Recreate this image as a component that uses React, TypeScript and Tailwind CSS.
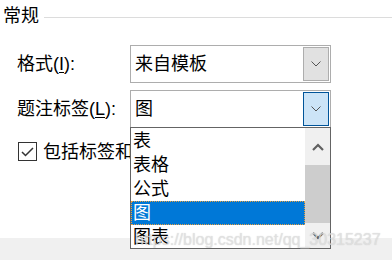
const Chevron = ({ className }: { className?: string }) => (
  <svg width="10" height="6" viewBox="0 0 10 6" className={className}>
    <polyline points="0.5,0.5 5,5 9.5,0.5" fill="none" stroke="#555" strokeWidth="1" />
  </svg>
);

const listItems = ['表', '表格', '公式', '图', '图表'];

export default function App() {
  return (
    <div
      className="relative flex h-[260px] w-[392px] flex-col overflow-hidden bg-white text-[18px] text-black"
      style={{ fontFamily: '"Liberation Sans", "Noto Sans CJK SC", sans-serif' }}
    >
      {/* Group header */}
      <div className="flex h-[28px] items-center pl-[3px] pt-[4px]">
        <span className="leading-none">常规</span>
        <div className="ml-[5px] mt-[2px] h-px flex-1 bg-[#dcdcdc]" />
      </div>

      {/* Format */}
      <div className="mt-[17px] flex items-center pl-[17px]">
        <span className="w-[113px] leading-none">
          格式(<span className="underline underline-offset-2">I</span>):
        </span>
        <div className="flex h-[38px] w-[201px] items-center border border-[#adadad] p-px">
          <span className="flex-1 pl-[3px] leading-none">来自模板</span>
          <div className="flex h-full w-[26px] items-center justify-center border border-[#adadad] bg-[#e1e1e1]">
            <Chevron />
          </div>
        </div>
      </div>

      {/* Caption label */}
      <div className="mt-[7px] flex items-center pl-[17px]">
        <span className="w-[113px] leading-none">
          题注标签(<span className="underline underline-offset-2">L</span>):
        </span>
        <div className="flex h-[38px] w-[201px] items-center border border-[#adadad] p-px">
          <span className="flex-1 pl-[3px] leading-none">图</span>
          <div className="flex h-full w-[26px] items-center justify-center border border-[#005499] bg-[#cce4f7]">
            <Chevron />
          </div>
        </div>
      </div>

      {/* Checkbox */}
      <div className="mt-[14px] flex items-center pl-[18px]">
        <div className="flex h-[19px] w-[19px] items-center justify-center border border-[#333]">
          <svg width="13" height="10" viewBox="0 0 13 10">
            <polyline points="1,5 4.5,8.5 12,1" fill="none" stroke="#333" strokeWidth="1.5" />
          </svg>
        </div>
        <span className="ml-[6px] leading-none">包括标签和</span>
      </div>

      {/* Bottom band */}
      <div className="mt-auto h-[22px] bg-[#f0f0f0]" />

      {/* Dropdown list */}
      <div className="absolute left-[130px] top-[127px] flex h-[122px] w-[201px] border border-[#646464] bg-white">
        <div className="flex flex-1 flex-col pt-px">
          {listItems.map((item) => (
            <div
              key={item}
              className={
                item === '图'
                  ? 'flex h-[24px] shrink-0 items-center border border-dotted border-[#e8a040] bg-[#0078d7] pl-[1px] text-white'
                  : 'flex h-[24px] shrink-0 items-center pl-[2px]'
              }
            >
              <span className="leading-none">{item}</span>
            </div>
          ))}
        </div>
        <div className="flex w-[25px] flex-col bg-[#f0f0f0]">
          <div className="flex h-[37px] items-center justify-center">
            <svg width="12" height="8" viewBox="0 0 12 8">
              <polyline points="1,7 6,2 11,7" fill="none" stroke="#606060" strokeWidth="2.2" />
            </svg>
          </div>
          <div className="h-[58px] bg-[#cdcdcd]" />
          <div className="flex flex-1 items-center justify-center">
            <svg width="12" height="8" viewBox="0 0 12 8">
              <polyline points="1,1 6,6 11,1" fill="none" stroke="#606060" strokeWidth="2.2" />
            </svg>
          </div>
        </div>
      </div>

      {/* Watermark */}
      <div
        className="absolute left-[135px] top-[228px] text-[16px] text-[#e4e4e4]/80 [text-shadow:0_0_1px_rgba(120,120,120,0.35)]"
        style={{ fontFamily: '"Liberation Sans", sans-serif' }}
      >
        https://blog.csdn.net/qq_30315237
      </div>
    </div>
  );
}
